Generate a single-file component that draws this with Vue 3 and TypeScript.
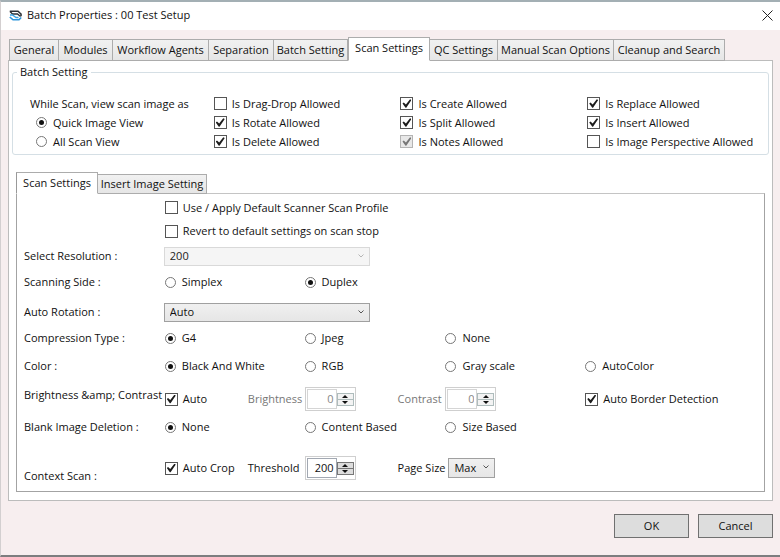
<script setup lang="ts">
import { reactive, ref } from 'vue'

interface Tab { name: string; width: number }
interface Flag { label: string; on: boolean; disabled?: boolean }
interface Choice { key: string; label: string; options: string[] }

const tabs: Tab[] = [
  { name: 'General', width: 50 },
  { name: 'Modules', width: 54 },
  { name: 'Workflow Agents', width: 96 },
  { name: 'Separation', width: 65 },
  { name: 'Batch Setting', width: 74 },
  { name: 'Scan Settings', width: 82 },
  { name: 'QC Settings', width: 68 },
  { name: 'Manual Scan Options', width: 116 },
  { name: 'Cleanup and Search', width: 111 },
]
const innerTabs: Tab[] = [
  { name: 'Scan Settings', width: 82 },
  { name: 'Insert Image Setting', width: 109 },
]
const activeTab = ref('Scan Settings')
const activeInner = ref('Scan Settings')

const view = ref('Quick Image View')
const flags = reactive<Flag[][]>([
  [
    { label: 'Is Drag-Drop Allowed', on: false },
    { label: 'Is Rotate Allowed', on: true },
    { label: 'Is Delete Allowed', on: true },
  ],
  [
    { label: 'Is Create Allowed', on: true },
    { label: 'Is Split Allowed', on: true },
    { label: 'Is Notes Allowed', on: true, disabled: true },
  ],
  [
    { label: 'Is Replace Allowed', on: true },
    { label: 'Is Insert Allowed', on: true },
    { label: 'Is Image Perspective Allowed', on: false },
  ],
])

const side: Choice = { key: 'side', label: 'Scanning Side :', options: ['Simplex', 'Duplex'] }
const compression: Choice = { key: 'compression', label: 'Compression Type :', options: ['G4', 'Jpeg', 'None'] }
const color: Choice = { key: 'color', label: 'Color :', options: ['Black And White', 'RGB', 'Gray scale', 'AutoColor'] }
const blank: Choice = { key: 'blank', label: 'Blank Image Deletion :', options: ['None', 'Content Based', 'Size Based'] }
const picked = reactive<Record<string, string>>({
  side: 'Duplex', compression: 'G4', color: 'Black And White', blank: 'None',
})

const brightnessLabel = 'Brightness &amp; Contrast'
const useDefault = ref(false)
const revert = ref(false)
const autoLevels = ref(true)
const autoBorder = ref(true)
const autoCrop = ref(true)
const resolution = ref('200')
const rotation = ref('Auto')
const pageSize = ref('Max')
const brightness = ref(0)
const contrast = ref(0)
const threshold = ref(200)
</script>

<template>
  <main class="dialog">
    <header class="titlebar">
      <svg class="logo" viewBox="0 0 13 11" aria-hidden="true">
        <path d="M.8 1.200H9L12 4v2.200" fill="none" stroke="#2b3036" stroke-width="1.600" />
        <path d="M1 1.500 3.500 4H8.500L11.500 6.500" fill="none" stroke="#2b3036" stroke-width="1.300" />
        <path d="M1 5h2.500L7 7.500h2.500" fill="none" stroke="#3aa3e3" stroke-width="1.300" />
        <path d="M.8 7 4 9.800H10L12.200 7.500" fill="none" stroke="#2c95dc" stroke-width="1.600" />
      </svg>
      <h1>Batch Properties : 00 Test Setup</h1>
      <button class="close" type="button" aria-label="Close">
        <svg viewBox="0 0 11 11"><path d="M.5.5l10 10M10.500.5l-10 10" stroke="#222" stroke-width="1" /></svg>
      </button>
    </header>

    <div class="body">
      <nav class="tabs" role="tablist">
        <button
          v-for="t in tabs" :key="t.name" type="button" role="tab" class="tab"
          :class="{ active: t.name === activeTab }" :aria-selected="t.name === activeTab"
          :style="{ width: t.width + 'px' }" @click="activeTab = t.name"
        >{{ t.name }}</button>
      </nav>

      <section class="panel">
        <fieldset class="group">
          <legend>Batch Setting</legend>
          <div class="flag-col views">
            <span class="caption">While Scan, view scan image as</span>
            <label v-for="v in ['Quick Image View', 'All Scan View']" :key="v" class="opt">
              <input v-model="view" type="radio" name="view" :value="v">{{ v }}
            </label>
          </div>
          <div v-for="(col, i) in flags" :key="i" class="flag-col">
            <label v-for="f in col" :key="f.label" class="opt">
              <input v-model="f.on" type="checkbox" :disabled="f.disabled">{{ f.label }}
            </label>
          </div>
        </fieldset>

        <nav class="tabs inner" role="tablist">
          <button
            v-for="t in innerTabs" :key="t.name" type="button" role="tab" class="tab"
            :class="{ active: t.name === activeInner }" :aria-selected="t.name === activeInner"
            :style="{ width: t.width + 'px' }" @click="activeInner = t.name"
          >{{ t.name }}</button>
        </nav>

        <section class="settings">
          <div class="row">
            <label class="opt wide"><input v-model="useDefault" type="checkbox">Use / Apply Default Scanner Scan Profile</label>
          </div>
          <div class="row">
            <label class="opt wide"><input v-model="revert" type="checkbox">Revert to default settings on scan stop</label>
          </div>
          <div class="row">
            <label class="name" for="resolution">Select Resolution :</label>
            <div class="combo long off">
              <select id="resolution" v-model="resolution" disabled><option>200</option></select>
              <svg viewBox="0 0 6 4"><path d="M.5.5 3 3 5.500.5" /></svg>
            </div>
          </div>
          <div class="row">
            <span class="name">{{ side.label }}</span>
            <label v-for="o in side.options" :key="o" class="opt">
              <input v-model="picked.side" type="radio" name="side" :value="o">{{ o }}
            </label>
          </div>
          <div class="row">
            <label class="name" for="rotation">Auto Rotation :</label>
            <div class="combo long">
              <select id="rotation" v-model="rotation"><option>Auto</option></select>
              <svg viewBox="0 0 6 4"><path d="M.5.5 3 3 5.500.5" /></svg>
            </div>
          </div>
          <div v-for="c in [compression, color]" :key="c.key" class="row">
            <span class="name">{{ c.label }}</span>
            <label v-for="o in c.options" :key="o" class="opt">
              <input v-model="picked[c.key]" type="radio" :name="c.key" :value="o">{{ o }}
            </label>
          </div>
          <div class="row">
            <span class="name high">{{ brightnessLabel }}</span>
            <div class="split">
              <label class="opt"><input v-model="autoLevels" type="checkbox">Auto</label>
              <label class="muted" for="brightness">Brightness</label>
            </div>
            <div class="split second">
              <div class="spin off">
                <input id="brightness" v-model="brightness" type="text" disabled>
                <div class="arrows">
                  <button type="button" disabled aria-label="Increase brightness"><svg viewBox="0 0 6 3"><path d="M3 0 6 3H0z" /></svg></button>
                  <button type="button" disabled aria-label="Decrease brightness"><svg viewBox="0 0 6 3"><path d="M0 0H6L3 3z" /></svg></button>
                </div>
              </div>
              <label class="muted" for="contrast">Contrast</label>
            </div>
            <div class="spin off">
              <input id="contrast" v-model="contrast" type="text" disabled>
              <div class="arrows">
                <button type="button" disabled aria-label="Increase contrast"><svg viewBox="0 0 6 3"><path d="M3 0 6 3H0z" /></svg></button>
                <button type="button" disabled aria-label="Decrease contrast"><svg viewBox="0 0 6 3"><path d="M0 0H6L3 3z" /></svg></button>
              </div>
            </div>
            <label class="opt"><input v-model="autoBorder" type="checkbox">Auto Border Detection</label>
          </div>
          <div class="row">
            <span class="name">{{ blank.label }}</span>
            <label v-for="o in blank.options" :key="o" class="opt">
              <input v-model="picked.blank" type="radio" name="blank" :value="o">{{ o }}
            </label>
          </div>
          <div class="row last">
            <span class="name low">Context Scan :</span>
            <div class="split">
              <label class="opt"><input v-model="autoCrop" type="checkbox">Auto Crop</label>
              <label for="threshold">Threshold</label>
            </div>
            <div class="split second">
              <div class="spin">
                <input id="threshold" v-model="threshold" type="text">
                <div class="arrows">
                  <button type="button" aria-label="Increase threshold" @click="threshold++"><svg viewBox="0 0 6 3"><path d="M3 0 6 3H0z" /></svg></button>
                  <button type="button" aria-label="Decrease threshold" @click="threshold--"><svg viewBox="0 0 6 3"><path d="M0 0H6L3 3z" /></svg></button>
                </div>
              </div>
              <label for="page-size">Page Size</label>
            </div>
            <div class="combo short">
              <select id="page-size" v-model="pageSize"><option>Max</option></select>
              <svg viewBox="0 0 6 4"><path d="M.5.5 3 3 5.500.5" /></svg>
            </div>
          </div>
        </section>
      </section>

      <footer class="actions">
        <button type="button">OK</button>
        <button type="button">Cancel</button>
      </footer>
    </div>
  </main>
</template>

<style>
body { margin: 0; background: #fff; }
</style>

<style scoped>
.dialog, .dialog * { box-sizing: border-box; }
.dialog {
  display: flex;
  flex-direction: column;
  min-height: 100vh;
  border-top: 2px solid #a3afb4;
  border-bottom: 2px solid #7d7d7f;
  border-left: 1px solid #d3cfd0;
  background: #f7eeef;
  color: #111;
  font: 11px/16px "Open Sans", "Noto Sans", sans-serif;
  white-space: nowrap;
}
button, input, select { font: inherit; color: inherit; margin: 0; }

.titlebar {
  display: flex;
  align-items: center;
  height: 28px;
  padding: 0 7px 2px 8px;
  background: #fff;
}
.logo { width: 13px; height: 11px; margin-right: 5px; }
h1 { flex: 1; margin: 0; font: inherit; }
.close { display: flex; padding: 0; border: 0; background: none; }
.close svg { width: 11px; height: 11px; }

.body {
  display: flex;
  flex: 1;
  flex-direction: column;
  padding: 7px 7px 17px 7px;
}
.tabs {
  display: flex;
  align-items: flex-end;
  position: relative;
  height: 24px;
  padding-left: 1px;
  margin-bottom: -1px;
}
.tab {
  height: 22px;
  padding: 0;
  border: 1px solid #acacac;
  border-left-width: 0;
  background: linear-gradient(#f1f1f1, #e6e6e6);
  text-align: center;
}
.tab:first-child { border-left-width: 1px; }
.tab.active {
  height: 24px;
  padding-bottom: 2px;
  border-left-width: 1px;
  border-bottom-color: #fff;
  background: #fff;
}
.panel {
  display: flex;
  flex: 1;
  flex-direction: column;
  padding: 3px 7px 8px;
  border: 1px solid #bcbcbc;
  background: #fff;
}
.group {
  display: grid;
  grid-template-columns: 187fr 187fr 187fr 181fr;
  min-width: 0;
  height: 91px;
  margin: 0 -4px;
  padding: 14px 0 0 14px;
  border: 1px solid #d5dfe5;
  border-radius: 3px;
}
legend { margin-left: -10px; padding: 0 3px; }
.flag-col { display: grid; grid-template-rows: repeat(3, 19px); align-items: center; }
.caption { padding-left: 3px; }
.views .opt { padding-left: 9px; }
.opt { display: flex; align-items: center; gap: 5px; }

input[type="checkbox"], input[type="radio"] {
  display: grid;
  place-items: center;
  flex: none;
  appearance: none;
  background: #fff;
  border: 1px solid #555;
}
input[type="checkbox"] { width: 13px; height: 13px; }
input[type="radio"] { width: 11px; height: 11px; margin-right: 1px; border-color: #777; border-radius: 50%; }
input[type="checkbox"]:checked::before {
  content: "";
  width: 9px;
  height: 9px;
  background: #1d1d1d;
  clip-path: polygon(0 50%, 14% 38%, 38% 62%, 84% 2%, 100% 12%, 42% 96%, 34% 96%);
}
input[type="radio"]:checked::before {
  content: "";
  width: 5px;
  height: 5px;
  border-radius: 50%;
  background: #111;
}
input[type="checkbox"]:disabled { border-color: #b4b4b4; background: #e8e8e8; }
input[type="checkbox"]:disabled:checked::before { background: #777; }

.inner { height: 22px; padding: 0; margin-top: 17px; }
.inner .tab { height: 20px; }
.inner .tab.active { height: 22px; border-left-color: #999; padding-bottom: 1px; }
.settings {
  display: grid;
  grid-template-rows: 17px 30px 20px 32px 28px 24px 32px 34px 22px 42px;
  flex: 1;
  padding: 5px 0 0 7px;
  border: 1px solid #a3a3a3;
  border-top-color: #c4c4c4;
}
.row {
  display: grid;
  grid-template-columns: 141fr 140fr 141fr 140fr 179fr;
  align-items: center;
}
.row > * { min-width: 0; }
.high { align-self: start; margin-top: 5px; }
.last { padding-top: 18px; }
.low { align-self: end; margin-bottom: -4px; }
.wide { grid-column: 2 / -1; }
.split { display: grid; grid-template-columns: 83px 1fr; align-items: center; }
.second { grid-template-columns: 93px 1fr; }
.muted { color: #777; }

.combo { position: relative; display: flex; }
.combo select {
  width: 100%;
  height: 19px;
  padding: 0 5px;
  border: 1px solid #a0a0a0;
  border-radius: 0;
  appearance: none;
  background: linear-gradient(#f0f0f0, #e6e6e6);
}
.combo svg {
  position: absolute;
  top: 7px;
  right: 6px;
  width: 6px;
  height: 4px;
  fill: none;
  stroke: #555;
  pointer-events: none;
}
.long { grid-column: 2 / 4; width: 206px; margin-left: -1px; }
.short { width: 47px; margin-left: 3px; }
.short select { height: 20px; }
.off select { border-color: #d9d9d9; background: #f5f5f5; color: #222; opacity: 1; }
.off svg { stroke: #b5b5b5; }

.spin {
  display: flex;
  align-items: center;
  width: 51px;
  height: 24px;
  padding: 1px;
  border: 1px solid #cfcfcf;
  background: #fff;
}
.spin input {
  width: 30px;
  height: 20px;
  padding: 0 2px 2px;
  border: 1px solid #a2a8b2;
  background: #fff;
  text-align: right;
}
.arrows { display: grid; width: 19px; }
.arrows button {
  display: grid;
  place-items: center;
  height: 7px;
  padding: 0;
  border: 1px solid #777;
  background: #ddd;
}
.arrows button + button { margin-top: -1px; }
.arrows svg { width: 6px; height: 3px; fill: #111; stroke: none; }
.spin.off input { border-color: #d5d5d5; color: #888; }
.spin.off button { border-color: #aebcbc; background: #f3f3f3; }

.actions { display: flex; justify-content: flex-end; gap: 9px; margin-top: 13px; }
.actions button {
  width: 75px;
  height: 24px;
  padding: 0;
  border: 1px solid #707070;
  background: #ddd;
}
</style>
